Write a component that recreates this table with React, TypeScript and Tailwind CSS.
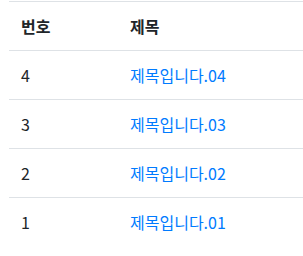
const ROWS = [
  { no: 4, title: "제목입니다.04" },
  { no: 3, title: "제목입니다.03" },
  { no: 2, title: "제목입니다.02" },
  { no: 1, title: "제목입니다.01" },
];

export default function App() {
  return (
    <div className="pt-px pl-[9px] bg-white text-[#212529] font-['Noto_Sans_CJK_KR','Noto_Sans',sans-serif] text-base">
      <table className="w-full border-collapse">
        <thead>
          <tr>
            <th className="w-[109px] border-t border-[#dee2e6] px-3 h-[49px] text-left font-bold">번호</th>
            <th className="border-t border-[#dee2e6] px-3 h-[49px] text-left font-bold">제목</th>
          </tr>
        </thead>
        <tbody>
          {ROWS.map((row) => (
            <tr key={row.no}>
              <td className="border-t border-[#dee2e6] px-3 h-[49px]">{row.no}</td>
              <td className="border-t border-[#dee2e6] px-3 h-[49px]">
                <a href="#" className="text-[#007bff]">{row.title}</a>
              </td>
            </tr>
          ))}
        </tbody>
      </table>
    </div>
  );
}
